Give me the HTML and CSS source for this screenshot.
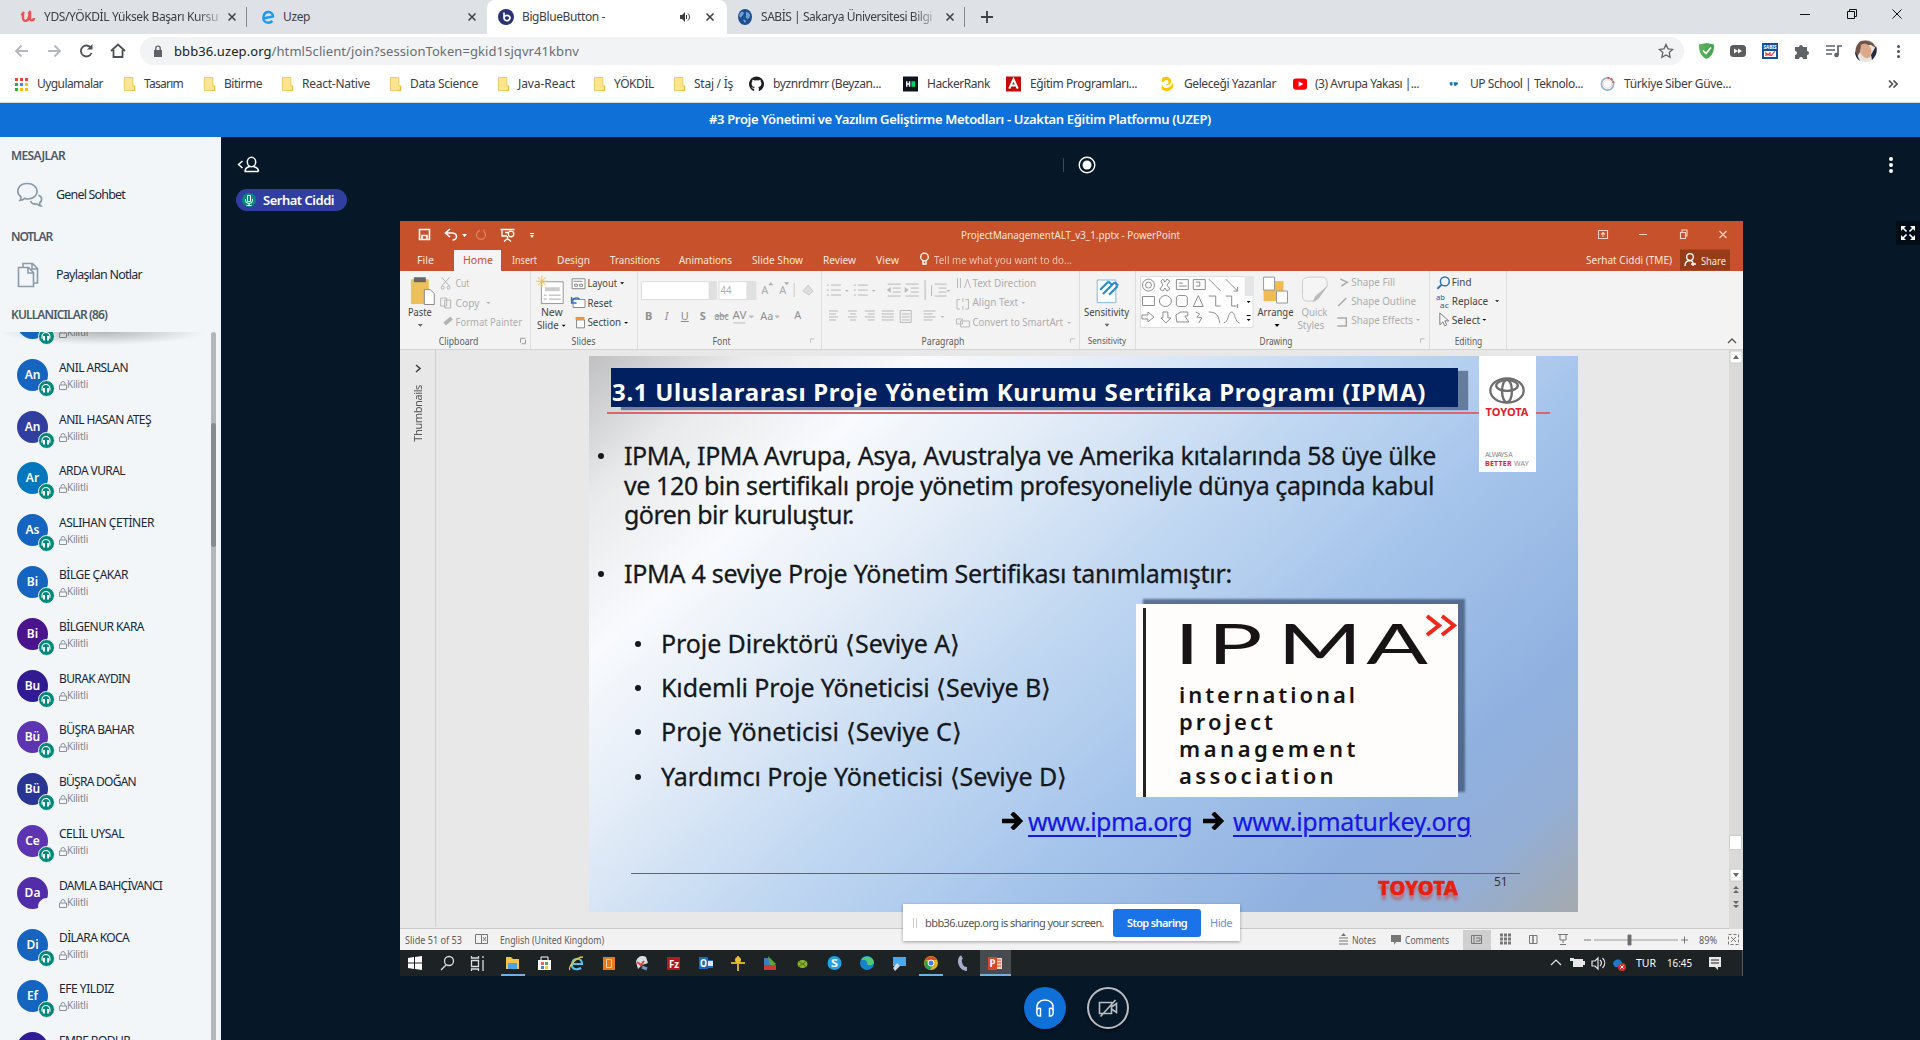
FILE: index.html
```html
<!DOCTYPE html>
<html lang="tr">
<head>
<meta charset="utf-8">
<title>BigBlueButton</title>
<link rel="stylesheet" href="styles.css">
</head>
<body>
<svg class="defs" aria-hidden="true">
  <symbol id="folder" viewBox="0 0 16 16"><path d="M2.500 1h9v9h2v5h-11z" fill="#fee391" stroke="#e9c85c"/><path d="M13.500 10v5h-3" fill="none" stroke="#e0b93c"/></symbol>
  <symbol id="x" viewBox="0 0 10 10"><path d="M1.500 1.500l7 7M8.500 1.500l-7 7" stroke="#3c4043" stroke-width="1.500"/></symbol>
  <symbol id="lock" viewBox="0 0 8 9"><path d="M.5 4h7v4.500h-7zM2 4V2.500a2 2 0 0 1 4 0V4" fill="none" stroke="#8b9299" stroke-width="1"/></symbol>
  <symbol id="phones" viewBox="0 0 16 16"><path d="M3.500 11V8.500a4.500 4.500 0 0 1 9 0V11" fill="none" stroke="#fff" stroke-width="1.300"/><path d="M4.500 8h2.300v5H4.500zM9.200 8h2.300v5H9.200z" fill="#fff"/></symbol>
  <linearGradient id="chk"><stop offset="0" stop-color="#5db462"/><stop offset="1" stop-color="#46a050"/></linearGradient>
</svg>

<header class="tabs">
  <div class="tab t1"><svg width="16" height="16" viewBox="0 0 16 16"><path d="M3 4v5c0 4 5 4 6-1l1-5v6c0 3 4 3 4 0M1.500 6.500L4 3M8.500 5L10.500 2" fill="none" stroke="#ec5252" stroke-width="2.400"/></svg><span class="name cut" data-w="174">YDS/YÖKDİL Yüksek Başarı Kursu</span><svg class="close"><use href="#x"/></svg></div>
  <div class="tab t2"><svg width="16" height="16" viewBox="0 0 16 16"><path d="M3 9.500L13 7.500C13 2 5 1 3.500 7.500 2.500 14 9 15 12.500 12" fill="none" stroke="#1a9af5" stroke-width="2.400"/></svg><span class="name" data-w="27">Uzep</span><svg class="close"><use href="#x"/></svg></div>
  <div class="tab t3 active"><svg width="16" height="16" viewBox="0 0 16 16"><circle cx="8" cy="8" r="8" fill="#283274"/><path d="M6 3.500v5.500M6 9a3 2.500 0 1 1 5 1.800c-1.800 1.800-5 .7-5-1.800" fill="none" stroke="#fff" stroke-width="1.700"/></svg><span class="name" data-w="83">BigBlueButton -</span><svg class="spk" width="12" height="12" viewBox="0 0 12 12"><path d="M1 4h2l3-3v10l-3-3H1z" fill="#3c4043"/><path d="M7.500 4v4M9 2.500c2 2 2 5 0 7" stroke="#3c4043" fill="none"/></svg><svg class="close"><use href="#x"/></svg></div>
  <div class="tab t4"><svg width="14" height="16" viewBox="0 0 14 16"><ellipse cx="7" cy="8" rx="7" ry="8" fill="#1c4f8f"/><path d="M2 4c3-3 5 0 3 2s-2 4-4 1M8 3c4 0 5 4 3 6s-4 0-3-2zM5 11c3-1 4 2 2 3" fill="#6d9fd4"/></svg><span class="name cut" data-w="171">SABİS | Sakarya Üniversitesi Bilgi</span><svg class="close"><use href="#x"/></svg></div>
  <svg class="plus" width="12" height="12"><path d="M6 0v12M0 6h12" stroke="#3c4043" stroke-width="1.800"/></svg>
  <svg class="winctl" width="110" height="34" viewBox="1800 0 110 34"><path d="M1800 14.500h10" stroke="#111"/><path d="M1847.500 11.500h7v7h-7zM1849.500 11.500v-2h7v7h-2M1892.500 9.500l9 9M1901.500 9.500l-9 9" fill="none" stroke="#111"/></svg>
</header>

<div class="toolbar">
  <svg class="nav" width="140" height="34" viewBox="0 35 140 34" fill="none" stroke-width="1.800"><path d="M28 52H16M21.500 46.500L16 52l5.500 5.500M48 52h12M54.500 46.500L60 52l-5.500 5.500" stroke="#b4b7bb"/><path d="M91 49a5.500 5.500 0 1 0 .5 5" stroke="#4d5156"/><path d="M92.500 45v5.500H87z" fill="#4d5156"/><path d="M111 52l7-6.500 7 6.500M113.500 51v7h9v-7" stroke="#4d5156"/></svg>
  <div class="omni"><svg width="10" height="13" viewBox="0 0 10 13"><path d="M1 5h8v7H1z" fill="#5f6368"/><path d="M2.800 5V3.300a2.200 2.200 0 0 1 4.400 0V5" fill="none" stroke="#5f6368" stroke-width="1.400"/></svg><span class="url" data-w="405"><b>bbb36.uzep.org</b>/html5client/join?sessionToken=gkid1sjqvr41kbnv</span><svg class="star" width="16" height="16" viewBox="0 0 16 16"><path d="M8 1.500l2 4.300 4.700.6-3.500 3.200.9 4.700L8 12l-4.100 2.300.9-4.700L1.300 6.400 6 5.800z" fill="none" stroke="#5f6368" stroke-width="1.300"/></svg></div>
  <svg class="ext" width="236" height="34" viewBox="1684 35 236 34"><path d="M1699 45.500l7.500-1.500 7.500 1.500c0 7-1 11-7.500 14.500-6.500-3.500-7.500-7.500-7.500-14.500z" fill="url(#chk)"/><path d="M1703 51.500l3 3 5-6" stroke="#fff" stroke-width="1.600" fill="none"/><rect x="1730" y="46" width="16" height="12" rx="3.500" fill="#5c5c5c"/><path d="M1734 49.500l4 2.500-4 2.500zM1738 49.500l4 2.500-4 2.500z" fill="#fff"/><path d="M1762 44h16v16h-16z" fill="#14519c"/><path d="M1764 52h12v6h-12z" fill="#fff"/><text x="1763.500" y="50" font-size="5" font-weight="700" fill="#fff" textLength="13">SABIS</text><path d="M1766 57v-3l2 2 2-2v3M1771 57l4-5" stroke="#e03030" fill="none" stroke-width="1.200"/><path d="M1795 48h4a2 2 0 1 1 4 0h4v4a2 2 0 1 1 0 4V60h-4a2 2 0 0 0-4 0h-4v-4a2 2 0 1 0 0-4z" fill="#5f6368"/><path d="M1826 47h9M1826 51h9M1826 55h6" stroke="#5f6368" stroke-width="1.700"/><path d="M1838 56v-9h4" stroke="#5f6368" stroke-width="1.700" fill="none"/><circle cx="1836.500" cy="56" r="2.300" fill="#5f6368"/><g><circle cx="1866" cy="52" r="11" fill="#e8e3de"/><path d="M1857 58c-3-6-1-13 4-16 7-2 13 1 15 7l-5-3-9 0-2 7z" fill="#6f5548"/><path d="M1861 46c4-3 9 0 10 4s0 8-3 9-7-3-8-6z" fill="#dba989"/><path d="M1871 56l5-9c2 5 0 10-4 14zM1855 52l5 10c-3-2-5-5-5-10z" fill="#20283e"/></g><g fill="#4d5156"><circle cx="1898.500" cy="47.500" r="1.500"/><circle cx="1898.500" cy="52.500" r="1.500"/><circle cx="1898.500" cy="57.500" r="1.500"/></g></svg>
</div>

<nav class="marks">
  <div class="mk"><svg width="15" height="14" viewBox="0 0 13 13"><path d="M0 0h3v3H0zM5 0h3v3H5zM10 0h3v3h-3z" fill="#ea4335"/><path d="M0 5h3v3H0zM0 10h3v3H0z" fill="#34a853"/><path d="M5 5h3v3H5z" fill="#4285f4"/><path d="M10 5h3v3h-3zM5 10h3v3H5zM10 10h3v3h-3z" fill="#fbbc05"/></svg><span data-w="66">Uygulamalar</span></div>
  <div class="mk"><svg><use href="#folder"/></svg><span data-w="39">Tasarım</span></div>
  <div class="mk"><svg><use href="#folder"/></svg><span data-w="38">Bitirme</span></div>
  <div class="mk"><svg><use href="#folder"/></svg><span data-w="68">React-Native</span></div>
  <div class="mk"><svg><use href="#folder"/></svg><span data-w="68">Data Science</span></div>
  <div class="mk"><svg><use href="#folder"/></svg><span data-w="57">Java-React</span></div>
  <div class="mk"><svg><use href="#folder"/></svg><span data-w="40">YÖKDİL</span></div>
  <div class="mk"><svg><use href="#folder"/></svg><span data-w="39">Staj / İş</span></div>
  <div class="mk wide"><svg viewBox="0 0 16 16"><path d="M8 0a8 8 0 0 0-2.500 15.600V13c-2 .4-2.500-1-3-1.700 1 0 1.400 1.200 3 1 .2-.6.4-.9.700-1.100C4 11 2.800 10 2.800 7.500c0-.9.300-1.600.8-2.100-.1-.6-.1-1.300.2-2 .8 0 1.500.4 2.100.8a8 8 0 0 1 4.200 0c.6-.4 1.300-.8 2.100-.8.3.7.3 1.400.2 2 .5.500.8 1.200.8 2.100 0 2.500-1.200 3.500-3.400 3.700.4.300.7.900.7 1.800v2.600A8 8 0 0 0 8 0" fill="#1b1f23"/></svg><span data-w="108">byznrdmrr (Beyzan...</span></div>
  <div class="mk wide"><svg viewBox="0 0 16 16"><path d="M0 0h16v16H0z" fill="#0e141e"/><path d="M4 5v6M4 8h3M7 5v6" stroke="#fff" stroke-width="1.500"/><path d="M9 5h4v6H9z" fill="#00d35f"/></svg><span data-w="63">HackerRank</span></div>
  <div class="mk wide"><svg viewBox="0 0 16 16"><path d="M0 0h16v16H0z" fill="#c30b0b"/><path d="M3.500 13L8 3l4.500 10M5 9.500h6" fill="none" stroke="#fff" stroke-width="2.200"/></svg><span data-w="107">Eğitim Programları...</span></div>
  <div class="mk wide"><svg viewBox="0 0 16 16"><path d="M3 6.500C-.5 2 5-1.500 10 1.500c5 4 0 9-5 7.500 3-.5 5-2 4-4S5 3.500 3 6.500z" fill="#fdc400"/><path d="M13 7c4 5-3 10-9 8-3-1-3-4-1-6 0 3 2 4 5 3s5-2 5-5z" fill="#fdc400"/></svg><span data-w="92">Geleceği Yazanlar</span></div>
  <div class="mk"><svg viewBox="0 0 16 16"><rect y="2" width="15" height="12" rx="3" fill="#f00"/><path d="M6 5l5 3-5 3z" fill="#fff"/></svg><span data-w="104">(3) Avrupa Yakası |...</span></div>
  <div class="mk up"><svg viewBox="0 0 16 16"><path d="M4 6h3v3c0 1-3 1-3-1zM8 6h4c2 2-1 4-3 4z" fill="#1273b8"/></svg><span data-w="113">UP School | Teknolo...</span></div>
  <div class="mk wide"><svg viewBox="0 0 16 16"><circle cx="8" cy="8" r="6.500" fill="none" stroke="#8fb7cc" stroke-width="1.800"/><path d="M8 1.500A6.500 6.500 0 0 1 14.500 7" fill="none" stroke="#e0584c" stroke-width="2.200" stroke-dasharray="2 1.500"/><circle cx="8" cy="8" r="4.500" fill="none" stroke="#f0d3cf"/></svg><span data-w="107">Türkiye Siber Güve...</span></div>
  <svg class="more" width="10" height="8"><path d="M1 .5L4.500 4 1 7.500M5.500 .5L9 4 5.500 7.500" fill="none" stroke="#4d5156" stroke-width="1.600"/></svg>
</nav>

<h1 class="room"><span data-w="502">#3 Proje Yönetimi ve Yazılım Geliştirme Metodları - Uzaktan Eğitim Platformu (UZEP)</span></h1>

<div class="app">
<aside class="side">
  <h2><span data-w="54">MESAJLAR</span></h2>
  <div class="entry"><svg width="26" height="26" viewBox="0 0 26 26" fill="none" stroke="#8b9aa8" stroke-width="1.700"><path d="M10.500 1.500c12 0 13 14.500 1 15.500-2 0-3-.3-4-.6C6 18 5 18.500 3 18.500c1-1.500 1-2.500 1-3.500C-2 10 1 1.500 10.500 1.500z"/><path d="M21.500 13c4 2 4 6 1 8 0 1 .5 2 1.500 3-2 0-3-1-4-2-3 .5-5.500-.5-6.500-3"/></svg><span data-w="69">Genel Sohbet</span></div>
  <h2><span data-w="41">NOTLAR</span></h2>
  <div class="entry notes"><svg width="26" height="26" viewBox="0 0 26 26" fill="none" stroke="#8b9aa8" stroke-width="1.600"><path d="M1.500 5.500h10l5 5v14h-15zM11 5.500v5.500h5.500M6 5V1.500h9.500l5 5v14.500H17M15 1.500V7h5.500"/></svg><span data-w="86">Paylaşılan Notlar</span></div>
  <h2><span data-w="96">KULLANICILAR (86)</span></h2>
  <div class="listwrap">
    <div class="fade"></div>
    <ul class="users">
      <li class="c1"><i>&nbsp;<em><svg><use href="#phones"/></svg></em></i><div><b>&nbsp;</b><small><svg><use href="#lock"/></svg><span data-w="21">Kilitli</span></small></div></li>
      <li class="c1"><i>An<em><svg><use href="#phones"/></svg></em></i><div><b data-w="69">ANIL ARSLAN</b><small><svg><use href="#lock"/></svg><span data-w="21">Kilitli</span></small></div></li>
      <li class="c2"><i>An<em><svg><use href="#phones"/></svg></em></i><div><b data-w="92">ANIL HASAN ATEŞ</b><small><svg><use href="#lock"/></svg><span data-w="21">Kilitli</span></small></div></li>
      <li class="c3"><i>Ar<em><svg><use href="#phones"/></svg></em></i><div><b data-w="66">ARDA VURAL</b><small><svg><use href="#lock"/></svg><span data-w="21">Kilitli</span></small></div></li>
      <li class="c1"><i>As<em><svg><use href="#phones"/></svg></em></i><div><b data-w="95">ASLIHAN ÇETİNER</b><small><svg><use href="#lock"/></svg><span data-w="21">Kilitli</span></small></div></li>
      <li class="c1"><i>Bi<em><svg><use href="#phones"/></svg></em></i><div><b data-w="69">BİLGE ÇAKAR</b><small><svg><use href="#lock"/></svg><span data-w="21">Kilitli</span></small></div></li>
      <li class="c4"><i>Bi<em><svg><use href="#phones"/></svg></em></i><div><b data-w="85">BİLGENUR KARA</b><small><svg><use href="#lock"/></svg><span data-w="21">Kilitli</span></small></div></li>
      <li class="c5"><i>Bu<em><svg><use href="#phones"/></svg></em></i><div><b data-w="71">BURAK AYDIN</b><small><svg><use href="#lock"/></svg><span data-w="21">Kilitli</span></small></div></li>
      <li class="c6"><i>Bü<em><svg><use href="#phones"/></svg></em></i><div><b data-w="75">BÜŞRA BAHAR</b><small><svg><use href="#lock"/></svg><span data-w="21">Kilitli</span></small></div></li>
      <li class="c7"><i>Bü<em><svg><use href="#phones"/></svg></em></i><div><b data-w="77">BÜŞRA DOĞAN</b><small><svg><use href="#lock"/></svg><span data-w="21">Kilitli</span></small></div></li>
      <li class="c6"><i>Ce<em><svg><use href="#phones"/></svg></em></i><div><b data-w="65">CELİL UYSAL</b><small><svg><use href="#lock"/></svg><span data-w="21">Kilitli</span></small></div></li>
      <li class="c8"><i>Da<em class="none"></em></i><div><b data-w="103">DAMLA BAHÇİVANCI</b><small><svg><use href="#lock"/></svg><span data-w="21">Kilitli</span></small></div></li>
      <li class="c1"><i>Di<em><svg><use href="#phones"/></svg></em></i><div><b data-w="70">DİLARA KOCA</b><small><svg><use href="#lock"/></svg><span data-w="21">Kilitli</span></small></div></li>
      <li class="c1"><i>Ef<em><svg><use href="#phones"/></svg></em></i><div><b data-w="55">EFE YILDIZ</b><small><svg><use href="#lock"/></svg><span data-w="21">Kilitli</span></small></div></li>
      <li class="c5"><i>&nbsp;</i><div><b data-w="71">EMRE BODUR</b></div></li>
    </ul>
    <div class="scroll"><div class="thumb"></div></div>
  </div>
</aside>

<main class="main">
  <div class="mtop">
    <svg width="26" height="20" viewBox="236 155 26 20" fill="none" stroke="#fff" stroke-width="1.500"><path d="M242.500 161l-4 3.500 4 3.500"/><ellipse cx="251.500" cy="162" rx="4.200" ry="4.700"/><path d="M245 171.500c0-4 3-4.500 5-5M258.500 171.500c0-4-3-4.500-5.500-5M244.500 171.500h14"/></svg>
    <span class="bar"></span>
    <svg class="rec" width="18" height="18"><circle cx="9" cy="9" r="7.800" fill="none" stroke="#fff" stroke-width="1.400"/><circle cx="9" cy="9" r="4.500" fill="#fff"/></svg>
    <svg class="keb" width="6" height="18" fill="#fff"><circle cx="3" cy="3" r="2"/><circle cx="3" cy="9" r="2"/><circle cx="3" cy="15" r="2"/></svg>
  </div>
  <div class="pill"><svg width="14" height="14" viewBox="0 0 14 14"><circle cx="7" cy="7" r="7" fill="#00897b"/><path d="M5.500 2.500h3v6h-3zM3.500 6v1.500a3.500 3 0 0 0 7 0V6M7 10.500v2M4.500 12.500h5" fill="none" stroke="#fff"/></svg><span data-w="71">Serhat Ciddi</span></div>
  <div class="stage">
  <section class="share">
    <svg class="ppthead" width="1343" height="50" viewBox="400 221 1343 50">
      <path d="M400 221h1343v50H400z" fill="#c6512a"/><path d="M454 250h47v21h-47z" fill="#f5f4f4"/><path d="M1680 249.500h50v21h-50z" fill="#963c18"/>
      <g fill="none" stroke="#fff" stroke-width="1.300"><path d="M419.500 229.500h10v10h-10zM422 239v-3.500h5v3.500M445.500 233h6c7 0 6 7 1 7M450 229l-4.500 4 4.500 4" stroke-width="1.600"/><path d="M480 230.500a4.500 4.500 0 1 0 4 1l0-2" stroke="#d9835f"/><path d="M500.500 229.500h14M502 230v6h5M507.500 236v3M504 241.500l3.500-3 3.500 3M505 232.500h3"/><circle cx="511" cy="234" r="2.800"/><path d="M1598.500 230.500h9v8h-9zM1603 237v-4M1601 234.500l2-2 2 2M1639 234.500h8M1680.500 232.500h5v6h-5zM1682 232v-2h5v6h-2M1719.500 231l7 7M1726.500 231l-7 7" stroke="#f7d5c6" stroke-width="1.100"/><circle cx="924.500" cy="257" r="3.800"/><path d="M923 261v3h3v-3" /><circle cx="1690" cy="257" r="3.300"/><path d="M1685 266c0-4 2-5 4-5.500 2 0 3 .5 4 1.500M1693 262v4M1691 264h5"/></g>
      <path d="M462 234h5l-2.500 3zM530 235h4l-2 3zM530 233h4v1h-4z" fill="#fff"/>
      <g class="w"><text x="961" y="239" textLength="219">ProjectManagementALT_v3_1.pptx - PowerPoint</text>
      <text x="417" y="264" textLength="17">File</text><text x="463" y="264" textLength="30" class="o">Home</text><text x="512" y="264" textLength="25">Insert</text><text x="557" y="264" textLength="33">Design</text><text x="610" y="264" textLength="50">Transitions</text><text x="679" y="264" textLength="53">Animations</text><text x="752" y="264" textLength="51">Slide Show</text><text x="823" y="264" textLength="33">Review</text><text x="876" y="264" textLength="23">View</text><text x="934" y="264" textLength="138" opacity=".75">Tell me what you want to do...</text><text x="1586" y="264" textLength="86">Serhat Ciddi (TME)</text><text x="1701" y="264.500" textLength="25">Share</text></g>
    </svg>
    <div class="ribbon">
      <svg width="131" height="78" viewBox="400 271 131 78"><path d="M411 279h18v25h-18z" fill="#eebf5a"/><path d="M414 277h12v5h-12z" fill="#666"/><path d="M424.500 289.500h6l4 4v11h-10z" fill="#fff" stroke="#888"/><g stroke="#b4b4b4" fill="none"><path d="M442 277l8 9M450 277l-8 9M441 298h6v8h-6zM445 300h6v8h-6z"/><circle cx="443" cy="287.500" r="1.500"/><circle cx="449" cy="287.500" r="1.500"/><path d="M445 324l7-6" stroke-width="4"/></g><text x="408" y="316" textLength="24">Paste</text><path d="M418 324h5l-2.500 3z" fill="#666"/><g class="g"><text x="456" y="287" textLength="14">Cut</text><text x="456" y="306.500" textLength="24">Copy</text><text x="456" y="326" textLength="67">Format Painter</text><path d="M487 302h4l-2 2z"/></g><text class="l" x="439" y="345" textLength="40">Clipboard</text><path d="M521.500 343v-4.500h5M526.500 340v4h-4" class="dl"/></svg>
      <svg width="107" height="78" viewBox="531 271 107 78"><path d="M541.500 281.500h22v22h-22z" fill="#fff" stroke="#999"/><path d="M545 287h15v4h-15z" fill="#ccc"/><path d="M544 295h3M549 295h12M544 299h3M549 299h12" stroke="#aaa"/><path d="M542 275v12M536 281h12M538 277l8 8M546 277l-8 8" stroke="#efbd62"/><text x="541" y="316" textLength="22">New</text><text x="537" y="329" textLength="22">Slide</text><path d="M562 325h4l-2 2z"/><g fill="#fff" stroke="#888"><path d="M572.500 278.500h13v10h-13zM574 281h9M575 284h3v2h-3zM580 284h3v2h-3z"/><path d="M573.500 299.500h12v8h-12zM577 320h8v8h-8z"/></g><path d="M572 303c0-5 5-6 8-4M572 297v6h5" stroke="#2f74c0" fill="none" stroke-width="1.500"/><path d="M576 317h9v3h-9z" fill="#ee9336"/><text x="588" y="287" textLength="30">Layout</text><text x="588" y="306.500" textLength="25">Reset</text><text x="588" y="326" textLength="34">Section</text><path d="M621 282h4l-2 2zM625 322h4l-2 2z"/><text class="l" x="572" y="345" textLength="24">Slides</text></svg>
      <svg width="184" height="78" viewBox="638 271 184 78"><path d="M641.500 281.500h75v18h-75zM719.500 281.500h36v18h-36z" fill="#fff" stroke="#ddd"/><path d="M709 281h8v19h-8zM747 281h10v19h-10z" fill="#e0e0e0"/><g class="g"><text x="721" y="294" textLength="11">44</text><text x="762" y="294" font-size="13">A</text><text x="780" y="294" font-size="12">A</text><path d="M769 285h5l-2.500-3zM785 282h5l-2.500 3z"/><path d="M804 291l5-6 5 6-4 4zM795 283v14" stroke="#c9c9c9" fill="#ddd"/></g><g class="f"><text x="645" y="320" font-weight="700">B</text><text x="665" y="320" font-style="italic">I</text><text x="681" y="320" text-decoration="underline">U</text><text x="700" y="320" font-weight="700">S</text><text x="715" y="320" textLength="14" text-decoration="line-through">abc</text><text x="733" y="319" textLength="14">AV</text><text x="761" y="320" textLength="13">Aa</text><text x="795" y="319">A</text></g><path d="M734 323h12M750 316h4l-2 2zM776 316h4l-2 2z" stroke="#bbb" fill="#bbb"/><text class="l" x="713" y="345" textLength="18">Font</text><path d="M811.500 343v-4h4" class="dl" opacity=".5"/></svg>
      <svg width="258" height="78" viewBox="822 271 258 78"><g stroke="#b9b9b9" fill="none"><path d="M831 285h10M831 290h10M831 295h10M858 285h10M858 290h10M858 295h10M827 285h2M827 290h2M827 295h2M854 285h2M854 290h2M854 295h2M888 284h13M893 288h8M893 292h8M888 296h13M906 284h13M911 288h8M911 292h8M906 296h13M935 284h12M939 288h8M939 292h8M935 296h12M932 285v11M925.500 280v20"/><path d="M829 311h9M829 314h7M829 317h9M829 320h7M848 311h9M850 314h6M848 317h9M850 320h6M865 311h10M868 314h7M865 317h10M868 320h7M882 311h12M882 314h12M882 317h12M882 320h12M924 311h12M924 314h9M924 317h12M924 320h9M900.500 310.500h11v12h-11zM902 314h8M902 317h8M902 320h8"/><path d="M958 278v10M961 278v10M965 288l3-9 3 9M957.500 299.500h3M957.500 299v10h3M969 299.500h-3M969 299v10h-3M963.500 298v4M963.500 306v4M957 319h6v5h-6zM961 321h9v6h-9z"/></g><path d="M887 290l4-3v6zM905 287v6l4-3zM845 290h4l-2 2zM872 290h4l-2 2zM947 290h4l-2 2zM941 316h4l-2 2zM1022 302h4l-2 2zM1068 322h4l-2 2z" fill="#bbb"/><g class="g"><text x="973" y="287" textLength="64">Text Direction</text><text x="973" y="306.500" textLength="46">Align Text</text><text x="973" y="326" textLength="91">Convert to SmartArt</text></g><text class="l" x="922" y="345" textLength="43">Paragraph</text><path d="M1071.500 343v-4h4" class="dl" opacity=".5"/></svg>
      <svg width="56" height="78" viewBox="1080 271 56 78"><path d="M1097.500 279.500h19v23h-19z" fill="#fff" stroke="#85b6d8"/><g transform="rotate(45 1109 288)" fill="none" stroke="#2b8cc9" stroke-width="2.200"><path d="M1104 283v12M1109 279v17M1114 280v12M1104 283h5M1109 279h5"/></g><text x="1084" y="316" textLength="46">Sensitivity</text><path d="M1105 324h5l-2.500 3z" fill="#666"/><text class="l" x="1088" y="345" textLength="39">Sensitivity</text></svg>
      <svg width="294" height="78" viewBox="1136 271 294 78"><path d="M1140.500 276.500h113v51h-113z" fill="#fff" stroke="#ddd"/><path d="M1245 276h9v20h-9z" fill="#e5e5e5"/><g fill="none" stroke="#8d8d8d"><circle cx="1148.500" cy="285" r="6"/><circle cx="1148.500" cy="285" r="3"/><path d="M1161 281l2-2 2 3 2-3 3 2-3 4 3 4-3 2-2-3-2 3-3-2 3-4zM1176.500 279.500h12v10h-12zM1193.500 279.500h12v10h-12zM1179 283h4M1179 286h8M1196 282h4v4h-4M1209 279l12 12M1226 279l12 12M1238 287v4h-4M1142.500 296.500h12v9h-12zM1176.500 297l2-1.500h7l2 1.500v8l-2 1.500h-7l-2-1.500zM1193.500 306.500l5-11 5 11zM1209 296h7v10h5M1226 296h6v10h6M1238 304v4M1142 315h6v-3l6 5-6 5v-3h-6zM1163 312h5v6h3l-5 5-5-5h2zM1176 315l5-3h7v4h-3l4 6h-12zM1196 312l4 2-3 3 5 1-3 5M1209 312c7 0 10 3 11 11M1224 323c5 0 4-11 8-11s3 11 8 11"/><ellipse cx="1165.500" cy="301" rx="6" ry="5.500"/></g><path d="M1247 301h4l-2 2zM1247 319h4l-2 2zM1247 315h4v1h-4zM1275 324h5l-2.500 3z"/><path d="M1264 281h20v20h-20z" fill="#f2bb52"/><path d="M1264 277h11v13h-11zM1277 291h11v12h-11z" fill="#fff" stroke="#999"/><text x="1258" y="316" textLength="36">Arrange</text><path d="M1303 282c0-4 4-5 8-5h12c4 0 5 3 5 8l-12 16h-9c-4 0-4-5-4-8z" fill="#f5f5f5" stroke="#ccc"/><path d="M1329 285l-10 14-6 3 3-6z" fill="#bbb"/><g class="g"><text x="1302" y="316" textLength="26">Quick</text><text x="1298" y="329" textLength="27">Styles</text><text x="1352" y="286" textLength="44">Shape Fill</text><text x="1352" y="305" textLength="65">Shape Outline</text><text x="1352" y="324" textLength="62">Shape Effects</text><path d="M1417 319h4l-2 2z"/></g><path d="M1341 279l7 3-6 4M1339 306l8-8M1338 318h9v8h-9" fill="none" stroke="#aaa" stroke-width="1.500"/><text class="l" x="1260" y="345" textLength="33">Drawing</text><path d="M1421.500 343v-4h4" class="dl" opacity=".6"/></svg>
      <svg width="77" height="78" viewBox="1430 271 77 78"><circle cx="1445" cy="281" r="4.500" fill="none" stroke="#2a72b8" stroke-width="1.500"/><path d="M1441.500 284.500l-4 4" stroke="#2a72b8" stroke-width="2"/><text class="ab" x="1436" y="300" textLength="9">ab</text><text class="ab" x="1440" y="308" textLength="9">ac</text><path d="M1440 313v12l3-3 2 4 2-1-2-4h4z" fill="#fff" stroke="#777"/><text x="1452" y="286" textLength="20">Find</text><text x="1452" y="305" textLength="37">Replace</text><text x="1452" y="324" textLength="29">Select</text><path d="M1496 300h4l-2 2zM1483 319h4l-2 2z"/><text class="l" x="1455" y="345" textLength="28">Editing</text></svg>
      <svg class="last" width="236" height="78" viewBox="1507 271 236 78"><path d="M1728 343l4-4 4 4" fill="none" stroke="#555" stroke-width="1.300"/></svg>
    </div>
    <div class="work">
      <div class="thumbs"><svg width="6" height="10"><path d="M1 1l4 3.500L1 8" fill="none" stroke="#444" stroke-width="1.600"/></svg><span>Thumbnails</span></div>
      <article class="slide">
        <h3><span data-w="814">3.1 Uluslararası Proje Yönetim Kurumu Sertifika Programı (IPMA)</span></h3>
        <hr class="red">
        <div class="body">
          <p class="b"><span data-w="812">IPMA, IPMA Avrupa, Asya, Avustralya ve Amerika kıtalarında 58 üye ülke</span></p>
          <p><span data-w="810">ve 120 bin sertifikalı proje yönetim profesyoneliyle dünya çapında kabul</span></p>
          <p><span data-w="230">gören bir kuruluştur.</span></p>
          <p class="b gap"><span data-w="608">IPMA 4 seviye Proje Yönetim Sertifikası tanımlamıştır:</span></p>
          <div class="sub">
            <p class="b"><span data-w="299">Proje Direktörü ⟨Seviye A⟩</span></p>
            <p class="b"><span data-w="390">Kıdemli Proje Yöneticisi ⟨Seviye B⟩</span></p>
            <p class="b"><span data-w="301">Proje Yöneticisi ⟨Seviye C⟩</span></p>
            <p class="b"><span data-w="406">Yardımcı Proje Yöneticisi ⟨Seviye D⟩</span></p>
          </div>
          <div class="links"><svg width="22" height="18"><path d="M0 9h17M10 1l8 8-8 8" fill="none" stroke="#000" stroke-width="4.500"/></svg><a data-w="164">www.ipma.org</a><svg width="22" height="18"><path d="M0 9h17M10 1l8 8-8 8" fill="none" stroke="#000" stroke-width="4.500"/></svg><a data-w="238">www.ipmaturkey.org</a></div>
        </div>
        <hr class="rule">
        <footer><span class="toy" data-w="80">TOYOTA</span><span class="no">51</span></footer>
        <div class="ipma"><div class="ibar"></div><div class="itext"><svg width="270" height="77"><text transform="translate(0 60) scale(1.6 1)" x="-3 18 61.500 117" y="0">IPMA</text></svg><span data-w="179">international</span><span data-w="97">project</span><span data-w="180">management</span><span data-w="158">association</span></div><svg class="chev" width="34" height="24"><path d="M2 2l12 9.500L2 21M17 2l12 9.500L17 21" fill="none" stroke="#f0271c" stroke-width="4"/></svg></div>
        <div class="toyota"><svg width="38" height="27" viewBox="0 0 40 30" fill="none" stroke="#6d6d6d" stroke-width="2.600"><ellipse cx="20" cy="15" rx="18.500" ry="13.500"/><ellipse cx="20" cy="9.500" rx="12" ry="6"/><ellipse cx="20" cy="15.500" rx="5.500" ry="12.500"/></svg><strong data-w="43">TOYOTA</strong><small><span data-w="36">ALWAYS A</span><span data-w="44"><b>BETTER</b> WAY</span></small></div>
      </article>
      <svg class="vscroll" width="14" height="579" viewBox="1729 350 14 579"><path d="M1729 350h14v579h-14z" fill="#dadada"/><path d="M1730 351h12v12h-12zM1729.500 835.500h12v14h-12zM1730 869h12v12h-12z" fill="#fff" stroke="#ccc"/><path d="M1733 359h6l-3-4zM1733 873h6l-3 4zM1733 889h6l-3-3zM1733 893h6l-3-3zM1733 901h6l-3 3zM1733 905h6l-3 3z" fill="#666"/></svg>
      <div class="notice"><svg width="6" height="12"><path d="M1.500 1v10M4.500 1v10" stroke="#ccc"/></svg><span data-w="179">bbb36.uzep.org is sharing your screen.</span><button><span data-w="60">Stop sharing</span></button><a data-w="22">Hide</a></div>
    </div>
    <svg class="status" width="1343" height="21" viewBox="400 929 1343 21"><path d="M400 929h1343v21H400z" fill="#f3f2f2"/><path d="M1463 930h28v20h-28z" fill="#cfcfcf"/><g class="s"><text x="405" y="943.500" textLength="57">Slide 51 of 53</text><text x="500" y="943.500" textLength="104">English (United Kingdom)</text><text x="1352" y="943.500" textLength="24">Notes</text><text x="1405" y="943.500" textLength="44">Comments</text><text x="1699" y="943.500" textLength="18">89%</text></g><g fill="none" stroke="#777"><path d="M475.500 934.500h6v9h-6zM481.500 934.500h6v9h-6zM483 937l3 4M486 937l-3 4M1339 938h9M1339 941h9M1339 944h9M1471.500 935.500h10v8h-10zM1474 936v7M1476 938h4v3h-4M1558 934.500h10M1560 935v5h6v-5M1563 940v3M1560 944.500h6M1584 940h7M1681 940h7M1684.500 936.500v7M1529.500 935.500h3.500v8h-3.500zM1533 935.500h4v8h-4z"/><path d="M1594 940h84" stroke="#999"/><path d="M1500 935h11M1500 939h11M1500 943h11" stroke-width="3" stroke-dasharray="3 1"/><path d="M1628 935h3v10h-3z" fill="#666"/><path d="M1728.500 934.500h10v10h-10z" stroke-dasharray="3 2"/><path d="M1731 937l5 5M1736 937l-5 5"/></g><path d="M1341 936l2.500-3 2.500 3zM1391 935h10v7h-5l-2 3v-3h-3z" fill="#777"/></svg>
    <svg class="task" width="1343" height="26" viewBox="400 950 1343 26"><path d="M400 950h1343v26H400z" fill="#1d2225"/><path d="M980 950h31v26h-31z" fill="#474b4e"/><path d="M501 974h24v2h-24zM919 974h24v2h-24zM980 974h31v2h-31z" fill="#76aede"/>
      <path d="M408 958l6-1v5.500h-6zM415 957l7-1v6.500h-7zM408 963.500h6v5.500l-6-1zM415 963.500h7v6.500l-7-1z" fill="#fff"/>
      <g fill="none" stroke="#ddd" stroke-width="1.300"><circle cx="449" cy="961" r="4.500"/><path d="M446 965l-5 5M471.500 960.500h7v6h-7zM471.500 956v2h7v-2M471.500 971v-2h7v2M483 956v2M483 960v11"/></g>
      <path d="M506 957h5l2 2h6v10h-13z" fill="#f6c444"/><path d="M508 963h9v6h-9z" fill="#4da1e8"/><path d="M538 960h13v10h-13z" fill="#fff"/><path d="M541 960v-3h7v3" stroke="#fff" fill="none"/><path d="M541 962h3v3h-3z" fill="#e65"/><path d="M545 962h3v3h-3z" fill="#5a5"/><path d="M541 966h3v3h-3z" fill="#48c"/><path d="M545 966h3v3h-3z" fill="#ec4"/>
      <path d="M572 964h10c0-7-9-7-10 0-1 6 6 6 9 4" fill="none" stroke="#55c4f2" stroke-width="2.200"/><path d="M570 970c-3-2 6-13 13-13" fill="none" stroke="#f2c230" stroke-width="1.300"/>
      <path d="M603 957h12v13h-12z" fill="#e9791b"/><path d="M606.500 959.500h5v8h-5z" fill="none" stroke="#fbd3a8"/><path d="M636 962c1-6 7-7 10-5l2 6-6 2-4 4z" fill="#d8dfe4"/><path d="M637 962l4 3 3-4" stroke="#d9453d" stroke-width="2" fill="none"/><path d="M642 967l5 2" stroke="#7296b8" stroke-width="3"/>
      <path d="M667 957h13v13h-13z" fill="#b3181a"/><text class="k" x="669" y="967.500" textLength="10">Fz</text><path d="M699 957h9v12h-9zM707 960h6v8h-6z" fill="#1a6bb9"/><text class="k" x="700" y="966.500" textLength="7">O</text><path d="M708 961h5v5h-5z" fill="#dce9f5"/>
      <path d="M738 956v15M731 963h14" stroke="#d3ad25" stroke-width="2"/><circle cx="738" cy="960" r="3" fill="#e8c136"/><path d="M764 958h6v10h-6z" fill="#397fbd"/><path d="M768 956l8 8-6 4z" fill="#57a548"/><path d="M764 965h12v5h-12z" fill="#cf3a35"/><ellipse cx="802.500" cy="964" rx="5" ry="4" fill="#8bb52a"/><path d="M798 961l9 6M807 961l-9 6" stroke="#4f7413"/>
      <circle cx="834.500" cy="963" r="7" fill="#21a3e2"/><text class="k" x="831" y="967" textLength="7">S</text><circle cx="867" cy="963" r="7" fill="#1583cc"/><path d="M861 960c3-6 12-4 13 2 0 4-6 4-7 2 1-4-3-5-6-4" fill="#53c87a"/><path d="M893 957h13v9h-13z" fill="#4da7e8"/><path d="M895 971l-2-3 4-5 3 3z" fill="#c8dcec"/>
      <circle cx="931" cy="963" r="7" fill="#ddb321"/><path d="M925 960a7 7 0 0 1 12 0z" fill="#df4334"/><path d="M925 960a7 7 0 0 0 5 10l3-5z" fill="#2f9f4d"/><circle cx="931" cy="963" r="3" fill="#3f83ee" stroke="#fff"/><path d="M962 957c-4 2-2 12 5 12" fill="none" stroke="#a6aecb" stroke-width="4"/><path d="M993 958h9v11h-9z" fill="#f3d5cc"/><path d="M988 957h9v13h-9z" fill="#d24726"/><path d="M996 960h5M996 963h5M996 966h5" stroke="#d24726"/><text class="k" x="989.500" y="967" textLength="6">P</text>
      <g fill="none" stroke="#e4e4e4" stroke-width="1.200"><path d="M1551 965l5-5 5 5M1592 961h3l3-3v11l-3-3h-3zM1600 960c2 2 2 4 0 6M1602.500 958c3 3 3 7 0 10"/><path d="M1742.500 950v26" stroke="#555"/></g><path d="M1573 959h10v8h-10zM1583 961h2v4h-2zM1570 958h4v3h-4zM1709 957h12v10h-3v3l-3-3h-6z" fill="#e8e8e8"/><path d="M1711 960h8M1711 963h8" stroke="#222"/><path d="M1613 964c0-4 6-6 8-3l2 3v3h-8z" fill="#1b79cf"/><circle cx="1622" cy="967" r="4" fill="#cf3030"/><path d="M1620.500 965.500l3 3M1623.500 965.500l-3 3" stroke="#fff"/><text x="1636" y="967" textLength="20" class="t">TUR</text><text x="1667" y="967" textLength="25" class="t">16:45</text></svg>
  </section>
  <div class="fs"><svg width="16" height="16" viewBox="0 0 16 16"><path d="M1 6V1h5zM10 1h5v5zM15 10v5h-5zM6 15H1v-5z" fill="#fff"/><path d="M3 3l3.500 3.500M13 3L9.500 6.500M13 13L9.500 9.500M3 13l3.500-3.500" stroke="#fff" stroke-width="1.600"/></svg></div>
  </div>
  <div class="actions">
    <div class="btn on"><svg width="20" height="20" viewBox="0 0 20 20" fill="none" stroke="#fff" stroke-width="1.500"><path d="M2 12C1 5 5 2 10 2s9 3 8 10"/><path d="M1.800 13c.2-3 3.700-3.500 3.700-2v7c-3 .5-4-2-3.700-5zM18.200 13c-.2-3-3.700-3.500-3.700-2v7c3 .5 4-2 3.700-5z"/></svg></div>
    <div class="btn off"><svg width="20" height="18" viewBox="0 0 20 18" fill="none" stroke="#b9bcc0" stroke-width="1.600"><path d="M1.500 3.500h12v11h-12zM13.500 8l5-3.500v9l-5-3.500M2.500 17.500L17.500 1"/></svg></div>
  </div>
</main>
</div>
<script src="fit.js"></script>
</body>
</html>
```
FILE: styles.css
```css
* { box-sizing: border-box; }
body { margin: 0; width: 1920px; height: 1040px; overflow: hidden; background: #fff; font: 12px/16px "Noto Sans", sans-serif; color: #3c4043; }
svg { display: block; flex: none; }
.defs { position: absolute; width: 0; height: 0; }
[data-w] { display: inline-block; white-space: nowrap; flex: none; }
h1, h2, h3, p, hr, ul { margin: 0; padding: 0; border: 0; }

.tabs { display: flex; height: 34px; background: #dee1e6; align-items: center; }
.tab { display: flex; align-items: center; height: 34px; position: relative; padding-right: 10px; }
.tab .name { white-space: nowrap; }
.cut { -webkit-mask-image: linear-gradient(90deg, #000 88%, rgba(0,0,0,.3)); }
.t1 { width: 247px; padding-left: 20px; gap: 8px; }
.t1::after, .t4::after { content: ""; position: absolute; right: 0; top: 7px; height: 20px; width: 1px; background: #868b90; }
.t2 { width: 240px; padding-left: 13px; gap: 7px; }
.t3 { width: 240px; padding-left: 11px; gap: 8px; }
.t4 { width: 238px; padding-left: 11px; gap: 9px; }
.active { background: #fff; border-radius: 8px 8px 0 0; }
.close { width: 10px; height: 10px; margin-left: auto; }
.t3 .spk { margin-left: auto; }
.t3 .close { margin-left: 6px; margin-right: 2px; }
.plus { margin-left: 16px; }
.winctl { margin-left: auto; margin-right: 10px; }

.toolbar { display: flex; height: 34px; align-items: center; }
.omni { display: flex; align-items: center; width: 1544px; height: 28px; border-radius: 14px; background: #f1f3f4; padding: 0 10px 0 13px; gap: 11px; }
.url { font-size: 13px; color: #6a6e73; }
.url b { font-weight: 400; color: #202124; }
.star { margin-left: auto; }

.marks { display: grid; grid-template-columns: 108px 80px 78px 108px 108px 96px 80px 77px 154px 103px 154px 133px 153px 154px 288px auto; padding: 0 0 2px 14px; height: 35px; align-items: center; border-bottom: 1px solid #d5d8dc; }
.mk { display: flex; align-items: center; gap: 7px; }
.mk svg { width: 15px; height: 16px; }
.mk:first-child { gap: 8px; }
.mk:first-child svg { height: 13px; }
.mk.wide { gap: 9px; }
.mk.up { gap: 9px; }

.room { height: 34px; background: #0f70d7; color: #fff; text-align: center; font: 600 13px/33px "Noto Sans", sans-serif; }
.app { display: flex; height: 903px; }
.side { width: 221px; background: #f3f6f9; display: flex; flex-direction: column; }
.side h2 { font: 600 12px/16px "Noto Sans", sans-serif; color: #4e5a66; padding-left: 11px; }
.side h2:first-child { padding-top: 11px; }
.entry { display: flex; align-items: center; height: 64px; padding-left: 17px; gap: 13px; font-size: 12.5px; color: #1b2a3a; margin-bottom: 1px; margin-top: -1px; }
.entry.notes { height: 62px; }
.side h2:nth-of-type(2) { margin-top: 1px; }
.listwrap { display: flex; position: relative; margin-top: 9px; height: 708px; overflow: hidden; }
.fade { position: absolute; left: 0; top: -13px; width: 205px; height: 26px; background: radial-gradient(closest-side, rgba(0,0,0,.26), rgba(0,0,0,0)); }
.users { list-style: none; width: 211px; margin-top: -25px; }
.users li { display: flex; height: 51.8px; padding-left: 17px; gap: 11px; }
.users i { font: 600 12px/32px "Noto Sans", sans-serif; width: 31px; height: 32px; border-radius: 50%; color: #fff; text-align: center; position: relative; background: var(--c); }
.users em { position: absolute; left: 21px; top: 21px; width: 17px; height: 17px; border-radius: 50%; background: #00897b; border: 1.500px solid #f3f6f9; }
.users em svg { width: 14px; height: 14px; }
.users em.none { background: #f3f6f9; }
.users b { display: block; width: max-content; font-weight: 400; font-size: 12px; line-height: 16px; color: #17273a; padding-top: 1px; }
.users small { display: flex; font-size: 10px; line-height: 15px; color: #7f878f; align-items: center; margin-top: 1px; }
.users small svg { width: 8px; height: 9px; margin-top: 2px; }
.c1 { --c: #1565c0; } .c2 { --c: #303f9f; } .c3 { --c: #0277bd; } .c4 { --c: #4a148c; }
.c5 { --c: #311b92; } .c6 { --c: #5e35b1; } .c7 { --c: #283593; } .c8 { --c: #512da8; }
.scroll { width: 5px; background: #b4b7ba; padding-top: 91px; border-radius: 3px 3px 0 0; }
.thumb { height: 124px; background: #888b8e; border-radius: 3px; }

.main { flex: 1; background: #061728; display: flex; flex-direction: column; }
.mtop { display: flex; align-items: center; height: 52px; padding: 4px 26px 0 15px; }
.bar { width: 1px; height: 14px; background: #39485a; margin-left: 801px; }
.rec { margin-left: 14px; }
.keb { margin-left: auto; }
.pill { display: flex; align-items: center; gap: 7px; width: 111px; height: 22px; margin-left: 15px; border-radius: 11px; background: #303f9f; color: #fff; padding: 0 0 1px 6px; font-weight: 600; font-size: 13px; }
.stage { display: flex; padding-top: 10px; padding-left: 179px; }
.fs { width: 24px; height: 24px; margin-left: 153px; background: #030d18; display: flex; align-items: center; justify-content: center; }
.share { width: 1343px; display: flex; flex-direction: column; }
.share text { font-family: "Noto Sans", sans-serif; font-size: 11px; fill: #444; }
.share .w text { fill: #fbe6dd; font-size: 11px; }
.share .w .o { fill: #c6512a; }
.share .g, .share .g text { fill: #adadad; }
.share .f text { fill: #8f8f8f; }
.share text.ab { font-size: 8px; fill: #2a5a9a; }
.share text.l { font-size: 10px; fill: #5c5c5c; }
.share .s text { font-size: 10px; fill: #5c5c5c; }
.share .task text { fill: #fff; }
.share .task .k { font-size: 10px; font-weight: 700; }
.dl { fill: none; stroke: #999; }
.ribbon { display: flex; background: #f4f3f3; border-bottom: 1px solid #d3d3d3; height: 79px; }
.ribbon svg { border-right: 1px solid #dedede; }
.ribbon .last { border: 0; }
.work { display: flex; height: 579px; background: #e9e8e8; position: relative; border-bottom: 1px solid #c9c9c9; }
.thumbs { width: 36px; border-right: 1px solid #cfcfcf; padding-top: 14px; display: flex; flex-direction: column; align-items: center; gap: 11px; font-size: 11px; color: #555; margin-bottom: 1px; }
.thumbs span { writing-mode: vertical-rl; transform: rotate(180deg); letter-spacing: -.4px; }
.slide { position: relative; width: 989px; height: 556px; margin: 6px 151px 0 153px; color: #15181c; background: linear-gradient(138deg, #c0c0c2 0%, #e8eaec 10%, #f8fafd 21%, #e3ecf7 33%, #c3d9f2 47%, #a5c4eb 64%, #90b1e0 82%, #93aed6 91%, #9fabba 97%, #a4a9ae 100%); display: flex; flex-direction: column; }
.slide h3 { margin: 12px 0 0 22px; width: 847px; height: 39px; background: #00205f; box-shadow: 10px 3px 1px rgba(60,80,110,.65); color: #fff; font: 700 24px/48px "Noto Sans", "DejaVu Sans", sans-serif; padding-left: 1px; }
.red { width: 943px; height: 2px; margin: 5px 0 0 18px; background: #d9676b; }
.body { padding: 27px 0 0 35px; font-size: 25px; -webkit-text-stroke: .3px #15181c; }
.body p { line-height: 29.5px; }
.b span { position: relative; }
.b span::before { content: ""; position: absolute; left: -26px; top: 12px; width: 6px; height: 6px; border-radius: 50%; background: #15181c; }
.body .gap { margin-top: 29.500px; }
.sub { padding: 32px 0 0 37px; }
.sub p { line-height: 44.400px; }
.sub .b span::before { top: 20px; left: -26px; }
.links { display: flex; align-items: center; margin: 8px 0 0 378px; height: 30px; -webkit-text-stroke: .2px #1616e6; }
.links a { color: #1616e6; text-decoration: underline; text-underline-offset: 4px; margin: 0 11px 0 4px; }
.links a:last-child { margin-left: 8px; }
.rule { width: 889px; height: 1px; background: #5c6675; margin: 37px 0 0 42px; }
.slide footer { display: flex; padding-left: 789px; }
.toy { font: 800 20px/28px "Noto Sans", sans-serif; color: #e6200c; -webkit-text-stroke: .6px #e6200c; text-shadow: 0 5px 3px rgba(220,40,20,.5); }
.no { margin-left: 36px; font-size: 12px; line-height: 16px; color: #333; }
.ipma { position: absolute; left: 547px; top: 248px; width: 322px; height: 193px; background: #fffdfc; box-shadow: 7px -5px 2px rgba(60,82,118,.75); display: flex; }
.ibar { width: 3px; height: 189px; margin: 4px 0 0 7px; background: #2a2020; }
.itext { display: flex; flex-direction: column; align-items: flex-start; margin-left: 33px; color: #181314; font: 600 22px/27px "Noto Sans", sans-serif; }
.share .itext text { font: 400 57px Lato, sans-serif; fill: #181314; }
.itext svg { overflow: visible; }
.chev { position: absolute; right: -1px; top: 10px; }
.toyota { position: absolute; left: 890px; top: 0; width: 57px; height: 116px; background: #fff; display: flex; flex-direction: column; align-items: center; padding: 21px 1px 0 0; color: #e0202c; }
.toyota strong { font-size: 11px; line-height: 14px; font-weight: 700; margin-top: 1px; }
.toyota small { font-size: 7px; line-height: 9px; color: #888; display: flex; flex-direction: column; align-self: flex-start; margin: 31px 0 0 6px; }
.toyota small b { color: #e0202c; }
.notice { position: absolute; left: 503px; top: 554px; width: 337px; height: 37px; background: #fff; box-shadow: 0 1px 3px rgba(0,0,0,.35); display: flex; align-items: center; font-size: 11px; color: #555; padding-left: 9px; z-index: 2; }
.notice > span { margin-left: 7px; }
.notice button { width: 88px; height: 28px; margin: 0 9px; padding: 0; border: 0; border-radius: 3px; background: #1a73e8; color: #fff; font: 600 11px "Noto Sans", sans-serif; }
.notice a { color: #6b93cf; }
.actions { display: flex; gap: 21px; padding: 11px 0 0 803px; }
.btn { width: 42px; height: 42px; border-radius: 50%; display: flex; align-items: center; justify-content: center; box-shadow: 0 2px 3px rgba(0,0,0,.5); }
.on { background: #0f70d7; }
.off { border: 2.500px solid #b9bcc0; }
```
FILE: fit.js
```js
for (const el of document.querySelectorAll('[data-w]')) {
  const want = Number(el.dataset.w);
  const have = el.getBoundingClientRect().width;
  el.style.letterSpacing = (want - have) / el.textContent.length + 'px';
}
for (const t of document.querySelectorAll('text[textLength]')) {
  t.setAttribute('lengthAdjust', 'spacingAndGlyphs');
}
```
